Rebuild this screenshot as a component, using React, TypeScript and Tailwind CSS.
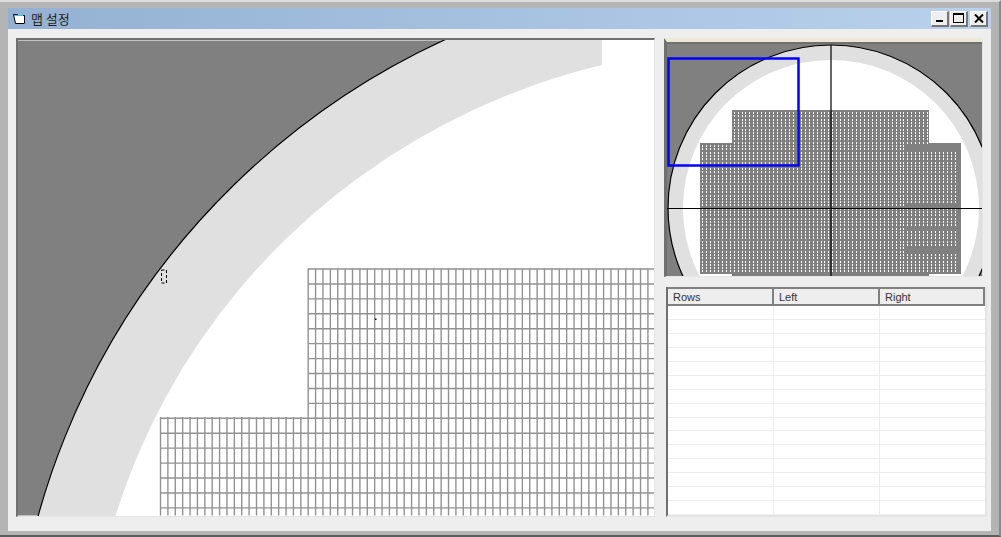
import React from 'react';

const range = (n: number) => Array.from({ length: n }, (_, i) => i);

// main view grid, in screen coordinates
const stepX = 7.385;
const stepY = 14.93;

const MainWafer: React.FC = () => {
  const cols = range(68);
  const rows = range(17);
  return (
    <svg className="block w-full h-full" viewBox="18 41 636 475">
      <defs>
        <clipPath id="ringClip">
          <rect x="0" y="0" width="602" height="600" />
        </clipPath>
      </defs>
      <rect x="18" y="41" width="636" height="475" fill="#808080" />
      <ellipse cx="765" cy="710" rx="753" ry="740" fill="#ffffff" />
      <g clipPath="url(#ringClip)">
        <ellipse cx="765" cy="710" rx="753" ry="740" fill="#e0e0e0" />
        <ellipse cx="765" cy="710" rx="679" ry="664" fill="#ffffff" />
      </g>
      <ellipse cx="765" cy="710" rx="753" ry="740" fill="none" stroke="#000000" strokeWidth="1.2" />
      <g stroke="#929292" strokeWidth="1.4">
        {cols.map((i) => {
          const x = 160.5 + i * stepX;
          return <line key={i} x1={x} x2={x} y1={x < 306 ? 417.5 : 269} y2="516" />;
        })}
        {rows.map((j) => {
          const y = 269.5 + j * stepY;
          return <line key={j} x1={y > 416 ? 160 : 308} x2="654" y1={y} y2={y} />;
        })}
      </g>
      <rect x="375" y="319" width="1.5" height="1.5" fill="#000000" />
      <rect x="161.5" y="270.5" width="5" height="13" fill="none" stroke="#000000" strokeDasharray="3 2" />
    </svg>
  );
};

const isBand = (x: number, y: number) => {
  if (x < 905) return false;
  return (y >= 143 && y < 150) || (y >= 202 && y < 207) || (y >= 225 && y < 229) || (y >= 247 && y < 253);
};

const inGrid = (x: number, y: number) => {
  if (y < 112 || y >= 274) return false;
  if (y < 145) return x >= 733 && x < 928;
  return x >= 702 && x < 958;
};

const buildDots = () => {
  let d = '';
  for (let j = 0; j < 50; j++) {
    const y = Math.round(112 + j * 3.3);
    for (let i = 0; i < 66; i++) {
      const x = Math.round(702 + i * 3.95);
      if (inGrid(x, y) && !isBand(x, y)) d += `M${x} ${y}h1v2h-1z`;
    }
  }
  return d;
};

const MiniWafer: React.FC = () => (
  <svg className="block w-full h-full" viewBox="667 44 315 232">
    <rect x="667" y="44" width="315" height="232" fill="#808080" />
    <circle cx="831" cy="208" r="163" fill="#e0e0e0" stroke="#000000" strokeWidth="1.2" />
    <circle cx="831" cy="208" r="148" fill="#ffffff" />
    <path d="M732 110h197v33h32v131h-32v2h-197v-2h-32v-131h32z" fill="#808080" />
    <path d={buildDots()} fill="#ffffff" shapeRendering="crispEdges" />
    <g stroke="#000000" strokeWidth="1.2">
      <line x1="831" x2="831" y1="45" y2="276" />
      <line x1="667" x2="982" y1="208.5" y2="208.5" />
    </g>
    <rect x="668.5" y="58.5" width="130" height="107" fill="none" stroke="#0000ff" strokeWidth="2.5" />
  </svg>
);

const CaptionButton: React.FC<{ className?: string; children: React.ReactNode }> = ({ className, children }) => (
  <div
    className={`w-[18px] h-[16px] bg-[#eeeeee] border-t border-l border-t-white border-l-white border-r-2 border-b-2 border-r-[#777777] border-b-[#777777] flex items-center justify-center ${className ?? ''}`}
  >
    {children}
  </div>
);

const columns = [
  { label: 'Rows', width: 'w-[106px]' },
  { label: 'Left', width: 'w-[106px]' },
  { label: 'Right', width: 'flex-1' },
];

const RowsTable: React.FC = () => (
  <div className="h-[230px] w-[321px] bg-white border-l-2 border-l-[#707070] border-r-2 border-b-2 border-r-[#e4e4e4] border-b-[#e4e4e4] flex flex-col mt-[10px] ml-[2px]">
    <div className="h-[19px] flex border-t-2 border-t-[#808080] bg-[#eeeeee]">
      {columns.map((col) => (
        <div
          key={col.label}
          className={`${col.width} border-r-2 border-b-2 border-r-[#808080] border-b-[#808080] pl-[5px] text-[11px] leading-[17px] text-[#333333]`}
        >
          {col.label}
        </div>
      ))}
    </div>
    {range(15).map((r) => (
      <div key={r} className="h-[14px] flex border-b border-b-[#eeeeee]">
        <div className="w-[106px] border-r border-r-[#eeeeee]" />
        <div className="w-[106px] border-r border-r-[#eeeeee]" />
        <div className="flex-1" />
      </div>
    ))}
  </div>
);

export default function App() {
  return (
    <div className="w-[1001px] h-[537px] bg-[#b4b4b4] border-b-2 border-b-[#5c5c5c] border-r-2 border-r-[#8a8a8a] border-t-2 border-t-[#dddddd] pt-[6px] px-[8px] pb-[4px] font-['Liberation_Sans',sans-serif] overflow-hidden">
      <div className="h-[523px] bg-[#eeeeee] flex flex-col">
        <div className="h-[21px] shrink-0 bg-gradient-to-r from-[#94b1d3] to-[#b9d1ec] flex items-center pl-[5px] pr-[3px]">
          <svg width="13" height="12" viewBox="0 0 13 12" className="shrink-0">
            <path d="M0.5 1.5h4l1 1h6v8h-9z" fill="#ffffff" stroke="#000000" />
            <rect x="1" y="2" width="9" height="1" fill="#33c5d8" />
            <path d="M11.5 10.5h1" stroke="#808080" />
          </svg>
          <span className="ml-[5px] text-[13px] leading-none text-[#1f1f1f] font-['Noto_Sans_CJK_KR','Liberation_Sans',sans-serif]">
            맵 설정
          </span>
          <div className="ml-auto flex items-center">
            <CaptionButton>
              <div className="w-[7px] h-[2px] bg-black mt-[6px]" />
            </CaptionButton>
            <CaptionButton className="ml-px">
              <div className="w-[11px] h-[10px] border border-black border-t-2" />
            </CaptionButton>
            <CaptionButton className="ml-[2px]">
              <svg width="10" height="9" viewBox="0 0 10 9">
                <path d="M1 0.5l8 8M9 0.5l-8 8" stroke="#000000" strokeWidth="2" />
              </svg>
            </CaptionButton>
          </div>
        </div>
        <div className="flex-1 flex pt-[9px] pl-[8px]">
          <div className="w-[639px] h-[479px] border-t-2 border-l-2 border-t-[#707070] border-l-[#707070] border-r border-b border-r-[#e4e4e4] border-b-[#e4e4e4] bg-white">
            <MainWafer />
          </div>
          <div className="ml-[9px] w-[322px] flex flex-col">
            <div className="w-[319px] h-[239px] border-t-4 border-t-[#ece9d8] border-l-[3px] border-l-[#707070] border-r border-b border-r-[#e4e4e4] border-b-[#e4e4e4]">
              <div className="w-full h-full border-t-2 border-t-[#707070]">
                <MiniWafer />
              </div>
            </div>
            <RowsTable />
          </div>
        </div>
      </div>
    </div>
  );
}
